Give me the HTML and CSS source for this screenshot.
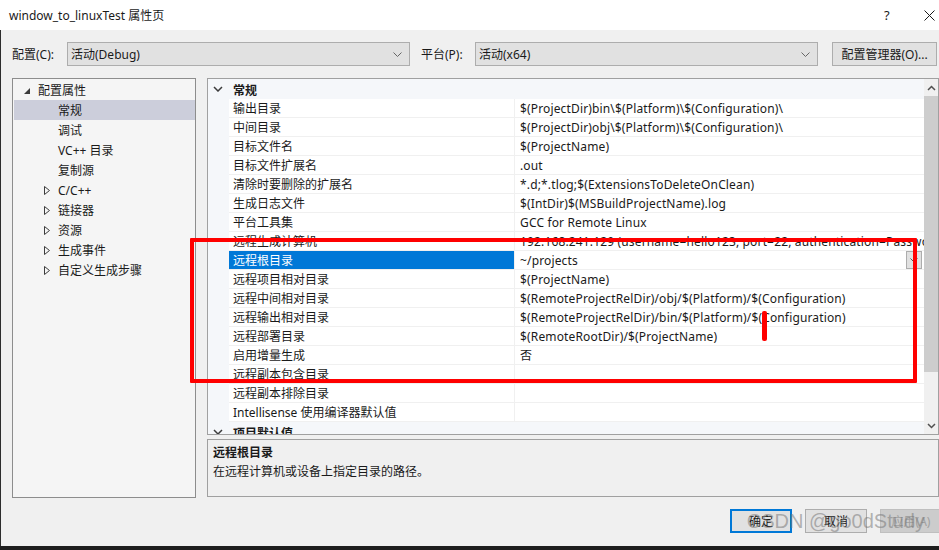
FILE: index.html
```html
<!DOCTYPE html>
<html>
<head>
  <meta charset="UTF-8">
  <title>window_to_linuxTest 属性页</title>
  <link rel="stylesheet" href="styles.css">
</head>
<body>
<div class="window">
  <div class="titlebar">
    <span class="title">window_to_linuxTest 属性页</span>
    <span class="help">?</span>
    <svg class="close" width="11" height="11" viewBox="0 0 11 11"><path d="M0.5 0.5 L10.5 10.5 M10.5 0.5 L0.5 10.5" stroke="#1a1a1a" stroke-width="1" fill="none"/></svg>
  </div>

  <div class="dialog">
    <div class="config-row">
      <span class="lbl">配置(C):</span>
      <div class="combo">
        <span>活动(Debug)</span>
        <svg class="chev" width="9" height="5" viewBox="0 0 9 5"><polyline points="0.5,0.5 4.5,4.5 8.5,0.5" stroke="#666" fill="none"/></svg>
      </div>
      <span class="lbl lbl-platform">平台(P):</span>
      <div class="combo">
        <span>活动(x64)</span>
        <svg class="chev" width="9" height="5" viewBox="0 0 9 5"><polyline points="0.5,0.5 4.5,4.5 8.5,0.5" stroke="#666" fill="none"/></svg>
      </div>
      <div class="btn btn-manager">配置管理器(O)...</div>
    </div>

    <div class="main">
      <div class="tree">
        <div class="node root">
          <svg class="tri-open" width="6" height="6" viewBox="0 0 6 6"><polygon points="6,0 6,6 0,6" fill="#3c3c3c"/></svg>
          <span>配置属性</span>
        </div>
        <div class="node child selected"><span>常规</span></div>
        <div class="node child"><span>调试</span></div>
        <div class="node child"><span>VC++ 目录</span></div>
        <div class="node child"><span>复制源</span></div>
        <div class="node child">
          <svg class="tri" width="6" height="9" viewBox="0 0 6 9"><polygon points="0.5,0.5 5.5,4.5 0.5,8.5" stroke="#3c3c3c" fill="none"/></svg>
          <span>C/C++</span>
        </div>
        <div class="node child">
          <svg class="tri" width="6" height="9" viewBox="0 0 6 9"><polygon points="0.5,0.5 5.5,4.5 0.5,8.5" stroke="#3c3c3c" fill="none"/></svg>
          <span>链接器</span>
        </div>
        <div class="node child">
          <svg class="tri" width="6" height="9" viewBox="0 0 6 9"><polygon points="0.5,0.5 5.5,4.5 0.5,8.5" stroke="#3c3c3c" fill="none"/></svg>
          <span>资源</span>
        </div>
        <div class="node child">
          <svg class="tri" width="6" height="9" viewBox="0 0 6 9"><polygon points="0.5,0.5 5.5,4.5 0.5,8.5" stroke="#3c3c3c" fill="none"/></svg>
          <span>生成事件</span>
        </div>
        <div class="node child">
          <svg class="tri" width="6" height="9" viewBox="0 0 6 9"><polygon points="0.5,0.5 5.5,4.5 0.5,8.5" stroke="#3c3c3c" fill="none"/></svg>
          <span>自定义生成步骤</span>
        </div>
      </div>

      <div class="right">
        <div class="grid">
          <div class="grid-body">
            <div class="cat">
              <svg class="cat-chev" width="10" height="6" viewBox="0 0 10 6"><polyline points="1,1 5,5 9,1" stroke="#3c3c3c" stroke-width="1.5" fill="none"/></svg>
              <span>常规</span>
            </div>
            <div class="row"><div class="name">输出目录</div><div class="val">$(ProjectDir)bin\$(Platform)\$(Configuration)\</div></div>
            <div class="row"><div class="name">中间目录</div><div class="val">$(ProjectDir)obj\$(Platform)\$(Configuration)\</div></div>
            <div class="row"><div class="name">目标文件名</div><div class="val">$(ProjectName)</div></div>
            <div class="row"><div class="name">目标文件扩展名</div><div class="val">.out</div></div>
            <div class="row"><div class="name">清除时要删除的扩展名</div><div class="val">*.d;*.tlog;$(ExtensionsToDeleteOnClean)</div></div>
            <div class="row"><div class="name">生成日志文件</div><div class="val">$(IntDir)$(MSBuildProjectName).log</div></div>
            <div class="row"><div class="name">平台工具集</div><div class="val">GCC for Remote Linux</div></div>
            <div class="row"><div class="name">远程生成计算机</div><div class="val">192.168.241.129 (username=hello123, port=22, authentication=Password)</div></div>
            <div class="row active">
              <div class="name">远程根目录</div>
              <div class="val">
                <span>~/projects</span>
                <div class="drop">
                  <svg width="8" height="5" viewBox="0 0 8 5"><polyline points="0.5,0.5 4,4 7.5,0.5" stroke="#555" fill="none"/></svg>
                </div>
              </div>
            </div>
            <div class="row"><div class="name">远程项目相对目录</div><div class="val">$(ProjectName)</div></div>
            <div class="row"><div class="name">远程中间相对目录</div><div class="val">$(RemoteProjectRelDir)/obj/$(Platform)/$(Configuration)</div></div>
            <div class="row"><div class="name">远程输出相对目录</div><div class="val">$(RemoteProjectRelDir)/bin/$(Platform)/$(Configuration)</div></div>
            <div class="row"><div class="name">远程部署目录</div><div class="val">$(RemoteRootDir)/$(ProjectName)</div></div>
            <div class="row"><div class="name">启用增量生成</div><div class="val">否</div></div>
            <div class="row"><div class="name">远程副本包含目录</div><div class="val"></div></div>
            <div class="row"><div class="name">远程副本排除目录</div><div class="val"></div></div>
            <div class="row"><div class="name">Intellisense 使用编译器默认值</div><div class="val"></div></div>
            <div class="cat">
              <svg class="cat-chev" width="10" height="6" viewBox="0 0 10 6"><polyline points="1,1 5,5 9,1" stroke="#3c3c3c" stroke-width="1.5" fill="none"/></svg>
              <span>项目默认值</span>
            </div>
          </div>
          <div class="scrollbar">
            <div class="sb-arrow">
              <svg width="9" height="6" viewBox="0 0 9 6"><polyline points="1,5 4.5,1.5 8,5" stroke="#505050" stroke-width="1.5" fill="none"/></svg>
            </div>
            <div class="sb-thumb"></div>
            <div class="sb-space"></div>
            <div class="sb-arrow">
              <svg width="9" height="6" viewBox="0 0 9 6"><polyline points="1,1 4.5,4.5 8,1" stroke="#505050" stroke-width="1.5" fill="none"/></svg>
            </div>
          </div>
        </div>
        <div class="desc">
          <div class="desc-title">远程根目录</div>
          <div class="desc-text">在远程计算机或设备上指定目录的路径。</div>
        </div>
      </div>
    </div>

    <div class="buttons">
      <div class="btn btn-ok">确定</div>
      <div class="btn">取消</div>
      <div class="btn btn-disabled">应用(A)</div>
      <span class="watermark">CSDN @go0dStudy</span>
    </div>
  </div>

  <div class="mark-box"></div>
  <div class="mark-line"></div>
</div>
</body>
</html>
```

FILE: styles.css
```css
* {
    box-sizing: border-box;
}

body {
    margin: 0;
    background: #1e1e1e;
    font-family: "Noto Sans", "Noto Sans CJK SC", sans-serif;
    font-size: 12px;
    color: #1a1a1a;
}

.window {
    position: relative;
    width: 939px;
    height: 550px;
    overflow: hidden;
}

.titlebar {
    height: 30px;
    background: #ffffff;
    display: flex;
    align-items: center;
    padding-left: 9px;
}

.title {
    flex: 1;
    font-size: 12px;
}

.help {
    width: 20px;
    margin-right: 20px;
    font-size: 13px;
}

.close {
    margin-right: 4px;
}

.dialog {
    height: 516px;
    background: #f0f0f0;
    box-shadow: inset 1px 0 0 #2d2d2d;
    display: flex;
    flex-direction: column;
}

/* config row */
.config-row {
    margin-top: 12px;
    height: 24px;
    display: flex;
    align-items: center;
    padding-left: 12px;
}

.lbl {
    width: 55px;
}

.lbl-platform {
    margin-left: 11px;
    width: 54px;
}

.combo {
    width: 343px;
    height: 24px;
    background: #e1e1e1;
    border: 1px solid #adadad;
    display: flex;
    align-items: center;
    padding: 0 7px 0 3px;
}

.combo span {
    flex: 1;
}

.btn {
    height: 24px;
    background: #e1e1e1;
    border: 1px solid #adadad;
    display: flex;
    align-items: center;
    justify-content: center;
}

.btn-manager {
    margin-left: 14px;
    width: 105px;
}

/* main area */
.main {
    margin-top: 12px;
    height: 420px;
    display: flex;
    padding-left: 12px;
}

.tree {
    width: 185px;
    height: 420px;
    background: #f5f5f5;
    border: 1px solid #8d8d8d;
    padding: 1px 0 0 1px;
}

.node {
    height: 20px;
    display: flex;
    align-items: center;
    position: relative;
}

.root {
    padding-left: 24px;
}

.root .tri-open {
    position: absolute;
    left: 10px;
    top: 8px;
}

.child {
    padding-left: 44px;
}

.child .tri {
    position: absolute;
    left: 30px;
    top: 6px;
}

.selected {
    background: #cccedb;
}

.right {
    margin-left: 11px;
    width: 735px;
    display: flex;
    flex-direction: column;
}

.grid {
    height: 357px;
    border: 1px solid #a0a0a0;
    background: #f5f7fa;
    display: flex;
    overflow: hidden;
}

.grid-body {
    width: 716px;
    overflow: hidden;
}

.cat {
    height: 20px;
    display: flex;
    align-items: center;
    font-weight: bold;
    background: #f5f7fa;
    position: relative;
    padding-left: 25px;
    padding-top: 1px;
}

.cat-chev {
    position: absolute;
    left: 5px;
    top: 7px;
}

.row {
    height: 19px;
    display: flex;
    margin-left: 21px;
    border-bottom: 1px solid #f0f0f0;
    background: #ffffff;
}

.name {
    width: 286px;
    padding: 1px 0 0 4px;
    line-height: 17px;
    border-right: 1px solid #f0f0f0;
    white-space: nowrap;
}

.val {
    flex: 1;
    padding: 1px 0 0 5px;
    line-height: 17px;
    letter-spacing: 0.15px;
    white-space: nowrap;
    overflow: hidden;
    display: flex;
    align-items: center;
}

.val span {
    flex: 1;
}

.active .name {
    background: #0078d7;
    color: #ffffff;
}

.active .val {
    padding-top: 0;
}

.drop {
    width: 16px;
    height: 18px;
    background: #e1e1e1;
    border: 1px solid #adadad;
    margin-right: 2px;
    display: flex;
    align-items: center;
    justify-content: center;
}

.scrollbar {
    width: 14px;
    background: #f0f0f0;
    display: flex;
    flex-direction: column;
}

.sb-arrow {
    height: 17px;
    display: flex;
    align-items: center;
    justify-content: center;
}

.sb-thumb {
    height: 276px;
    background: #cdcdcd;
}

.sb-space {
    flex: 1;
}

.desc {
    margin-top: 4px;
    height: 58px;
    border: 1px solid #a0a0a0;
    padding: 3px 5px;
}

.desc-title {
    font-weight: bold;
    line-height: 19px;
}

.desc-text {
    line-height: 19px;
}

/* bottom buttons */
.buttons {
    margin-top: 11px;
    height: 24px;
    display: flex;
    justify-content: flex-end;
    gap: 13px;
    margin-right: -3px;
    position: relative;
}

.buttons .btn {
    width: 62px;
}

.btn-ok {
    border: 2px solid #0078d7;
}

.btn-disabled {
    background: #cccccc;
    border-color: #bfbfbf;
    color: #a0a0a0;
}

.watermark {
    position: absolute;
    right: 17px;
    top: 1px;
    font-family: "Liberation Sans", sans-serif;
    font-size: 20px;
    color: rgba(120, 120, 120, 0.55);
    pointer-events: none;
}

/* red annotation */
.mark-box {
    position: absolute;
    left: 190px;
    top: 238px;
    width: 727px;
    height: 145px;
    border: 4px solid #ff0000;
    border-radius: 1px;
}

.mark-line {
    position: absolute;
    left: 762px;
    top: 311px;
    width: 5px;
    height: 30px;
    background: #ff0000;
    border-radius: 2px;
}
```
